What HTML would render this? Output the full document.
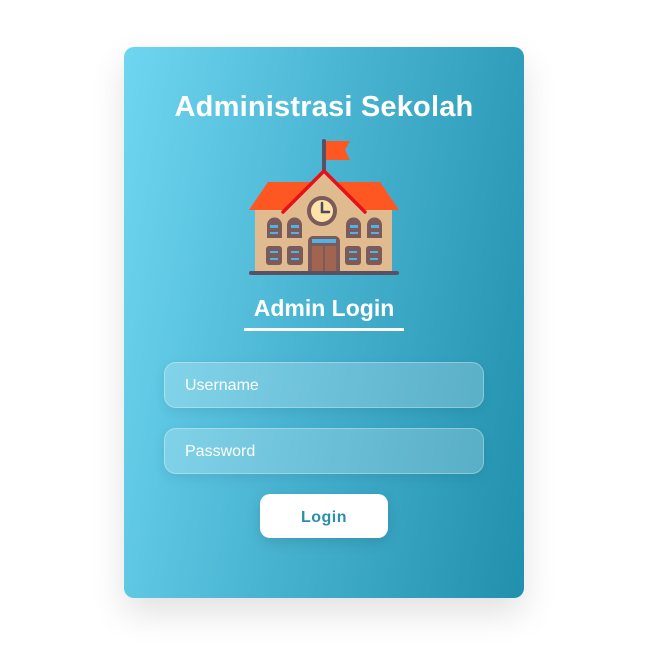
<!DOCTYPE html>
<html><head><meta charset="utf-8"><style>
html,body{margin:0;padding:0;width:647px;height:647px;background:#fff;overflow:hidden;font-family:"Liberation Sans",sans-serif}
.card{position:absolute;left:124px;top:47px;width:400px;height:551px;border-radius:10px;background:linear-gradient(100deg,#6fd6f0 0%,#4ab5d3 45%,#2190ad 100%);box-shadow:0 15px 35px rgba(0,0,0,0.12)}
.t{position:absolute;left:0;width:400px;text-align:center;color:#fff;font-weight:bold}
.inp{position:absolute;left:40px;width:318px;height:44px;border-radius:12px;background:rgba(255,255,255,0.22);border:1px solid rgba(255,255,255,0.3);box-shadow:0 4px 12px rgba(0,0,0,0.08);color:#fff;font-size:16px;line-height:46px;box-sizing:content-box}
.inp span{position:absolute;left:20px;top:0}
.btn{position:absolute;left:136px;top:447px;width:128px;height:44px;border-radius:10px;background:#fff;color:#2a8fab;font-size:16px;text-align:center;line-height:47px;box-shadow:0 4px 14px rgba(0,0,0,0.12);font-weight:bold;letter-spacing:0.5px}
</style></head><body>
<div class="card">
<div class="t" style="top:44px;font-size:29px;letter-spacing:0.2px">Administrasi Sekolah</div>
<div class="t" style="top:248px;font-size:23px">Admin Login</div>
<div style="position:absolute;left:120px;top:281px;width:160px;height:3px;background:#fff"></div>
<div class="inp" style="top:315px"><span>Username</span></div>
<div class="inp" style="top:381px"><span>Password</span></div>
<div class="btn">Login</div>
</div>
<svg style="position:absolute;left:0;top:0" width="647" height="647">
<rect x="322" y="139" width="4" height="34" rx="2" fill="#5a5065"/>
<path d="M326 141 H350 L345 150 L350 160 H326 Z" fill="#ff5722"/>
<path d="M249 210 L268 182 H380 L399 210 Z" fill="#ff5722"/>
<rect x="255" y="210" width="137" height="62" fill="#e0bb8f"/>
<path d="M283 212 L324 171 L365 212 Z" fill="#e0bb8f"/>
<path d="M283 212 L324 171 L365 212" fill="none" stroke="#e5101a" stroke-width="3.5" stroke-linejoin="round" stroke-linecap="round"/>
<circle cx="322" cy="211" r="13" fill="#fde3a7" stroke="#7a5a5a" stroke-width="4"/>
<path d="M322 203 V212 H329" fill="none" stroke="#4a4a5a" stroke-width="2.5" stroke-linecap="round"/>
<g fill="#7a5a5a">
<path d="M267 238 V225 a7.5 7.5 0 0 1 15 0 V238 Z"/>
<path d="M287 238 V225 a7.5 7.5 0 0 1 15 0 V238 Z"/>
<path d="M346 238 V225 a7.5 7.5 0 0 1 15 0 V238 Z"/>
<path d="M367 238 V225 a7.5 7.5 0 0 1 15 0 V238 Z"/>
<rect x="266" y="246" width="16" height="19" rx="3"/>
<rect x="287" y="246" width="16" height="19" rx="3"/>
<rect x="345" y="246" width="16" height="19" rx="3"/>
<rect x="366" y="246" width="16" height="19" rx="3"/>
<path d="M308 272 V241 a5 5 0 0 1 5 -5 H335 a5 5 0 0 1 5 5 V272 Z"/>
</g>
<g fill="#4fb3e8">
<rect x="270" y="225" width="8" height="3"/><rect x="270" y="232" width="8" height="2"/>
<rect x="291" y="225" width="8" height="3"/><rect x="291" y="232" width="8" height="2"/>
<rect x="350" y="225" width="8" height="3"/><rect x="350" y="232" width="8" height="2"/>
<rect x="371" y="225" width="8" height="3"/><rect x="371" y="232" width="8" height="2"/>
<rect x="270" y="251" width="8" height="2"/><rect x="270" y="258" width="8" height="2"/>
<rect x="291" y="251" width="8" height="2"/><rect x="291" y="258" width="8" height="2"/>
<rect x="349" y="251" width="8" height="2"/><rect x="349" y="258" width="8" height="2"/>
<rect x="370" y="251" width="8" height="2"/><rect x="370" y="258" width="8" height="2"/>
<rect x="312" y="239" width="24" height="4"/>
</g>
<rect x="312" y="246" width="11" height="26" fill="#a0644f"/>
<rect x="325" y="246" width="11" height="26" fill="#a0644f"/>
<rect x="249" y="271" width="150" height="4" rx="2" fill="#5a5065"/>
</svg>
</body></html>
